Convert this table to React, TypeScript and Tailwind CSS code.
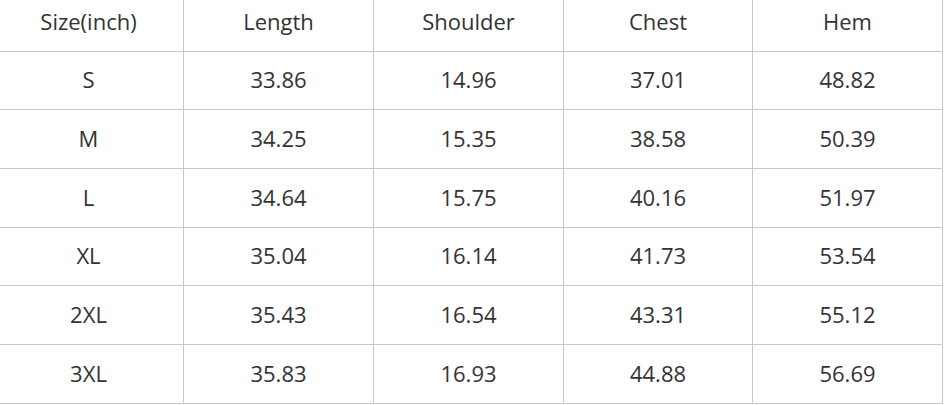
const headers = ['Size(inch)', 'Length', 'Shoulder', 'Chest', 'Hem']

const rows = [
  ['S', '33.86', '14.96', '37.01', '48.82'],
  ['M', '34.25', '15.35', '38.58', '50.39'],
  ['L', '34.64', '15.75', '40.16', '51.97'],
  ['XL', '35.04', '16.14', '41.73', '53.54'],
  ['2XL', '35.43', '16.54', '43.31', '55.12'],
  ['3XL', '35.83', '16.93', '44.88', '56.69'],
]

// row heights follow the screenshot's line pitch
const heights = ['h-[58px]', 'h-[59px]', 'h-[59px]', 'h-[58px]', 'h-[59px]', 'h-[59px]']

export default function App() {
  return (
    <div className="w-[949px] h-[405px] overflow-hidden bg-white">
      <div
        className="-ml-[7px] -mt-[8px] w-fit border-l border-t border-[#c9c9c9] text-[22px] text-[#333]"
        style={{ fontFamily: '"Open Sans", "Noto Sans", sans-serif' }}
      >
        <div className="grid grid-cols-[190px_190px_190px_189px_190px]">
          {headers.map((h) => (
            <div key={h} className="flex h-[59px] items-center justify-center border-b border-r border-[#c9c9c9] pb-[2px]">
              {h}
            </div>
          ))}
          {rows.map((row, i) =>
            row.map((cell, j) => (
              <div
                key={`${i}-${j}`}
                className={`flex ${heights[i]} items-center justify-center border-b border-r border-[#c9c9c9] pb-[2px]`}
              >
                {cell}
              </div>
            ))
          )}
        </div>
      </div>
    </div>
  )
}
